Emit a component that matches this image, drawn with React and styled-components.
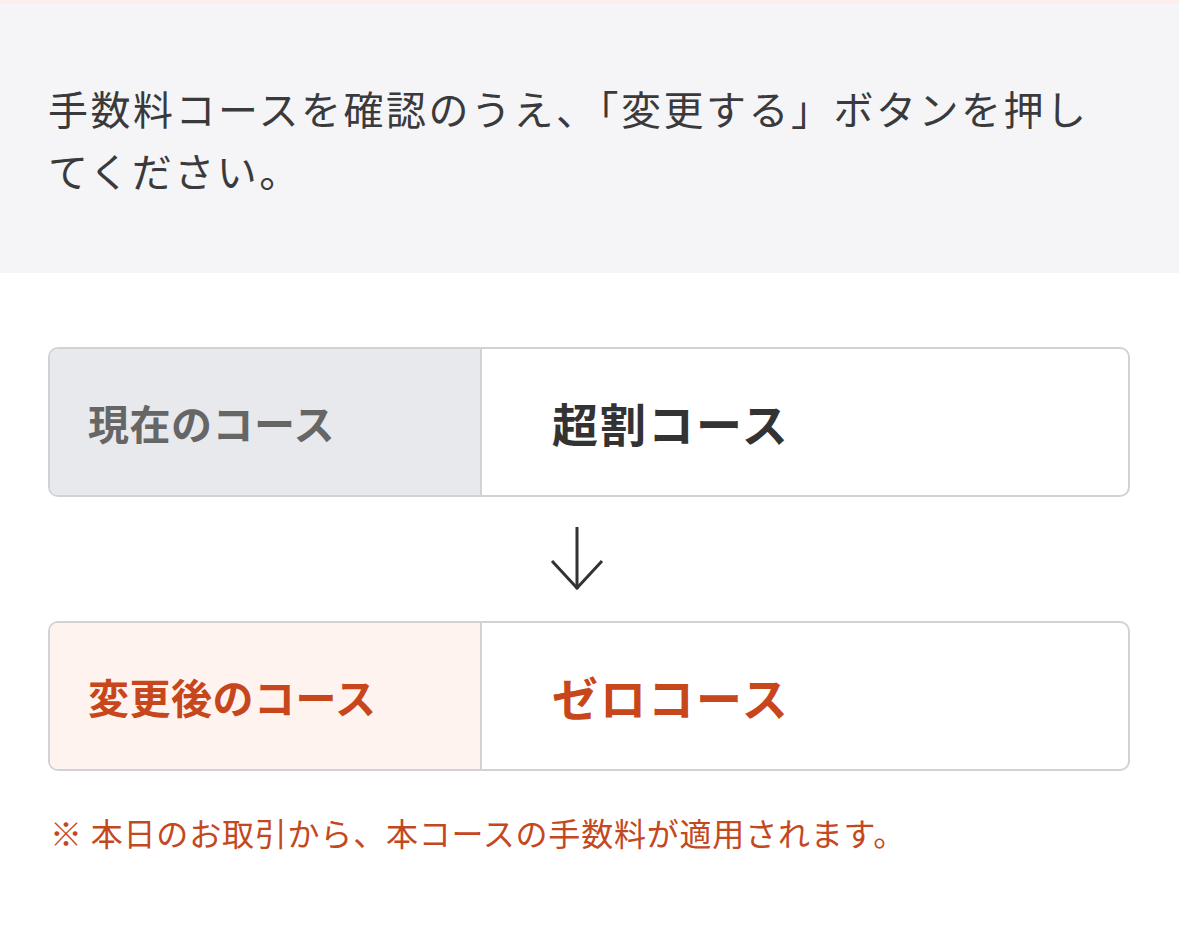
import React from 'react';
import styled, { createGlobalStyle } from 'styled-components';

const GlobalStyle = createGlobalStyle`
  html, body {
    margin: 0;
    padding: 0;
    background: #ffffff;
  }
  body {
    font-family: "Noto Sans CJK JP", "Noto Sans", sans-serif;
    color: #333333;
  }
`;

const Page = styled.div`
  width: 1179px;
  min-height: 939px;
  background: #ffffff;
`;

const TopStrip = styled.div`
  height: 4px;
  background: #fdeeec;
`;

const Intro = styled.section`
  background: #f5f5f7;
  padding: 73px 60px 72px 48px;
`;

const IntroText = styled.p`
  margin: 0;
  font-size: 40px;
  line-height: 62px;
  letter-spacing: 2.5px;
  font-weight: 400;
  color: #3a3a3c;
`;

const Body = styled.main`
  padding: 74px 49px 0 48px;
`;

const CourseRow = styled.div`
  display: grid;
  grid-template-columns: 432px 1fr;
  height: 150px;
  box-sizing: border-box;
  border: 2px solid #d2d2d4;
  border-radius: 10px;
  overflow: hidden;
  background: #ffffff;
`;

const Label = styled.div`
  display: flex;
  align-items: center;
  padding-left: 38px;
  border-right: 2px solid #d2d2d4;
  background: ${({ $accent }) => ($accent ? '#fff3f0' : '#e8e9ec')};
  color: ${({ $accent }) => ($accent ? '#c8461b' : '#666666')};
  font-size: 41px;
  font-weight: 700;
  letter-spacing: 0.5px;
`;

const Value = styled.div`
  display: flex;
  align-items: center;
  padding-left: 70px;
  color: ${({ $accent }) => ($accent ? '#c8461b' : '#333333')};
  font-size: 46px;
  font-weight: 700;
  letter-spacing: 2px;
`;

const ArrowWrap = styled.div`
  height: 124px;
  display: flex;
  align-items: center;
  padding-left: 501px;
`;

const Note = styled.p`
  margin: 37px 0 0 2px;
  font-size: 32px;
  line-height: 48px;
  letter-spacing: 0.8px;
  color: #c4481e;
`;

function DownArrow() {
  return (
    <svg width="56" height="66" viewBox="0 0 56 66" fill="none">
      <path d="M28 1 V63" stroke="#333333" strokeWidth="3" />
      <path d="M3 35 L28 62 L53 35" stroke="#333333" strokeWidth="3" strokeLinejoin="miter" />
    </svg>
  );
}

function Course({ label, value, accent }) {
  return (
    <CourseRow>
      <Label $accent={accent}>{label}</Label>
      <Value $accent={accent}>{value}</Value>
    </CourseRow>
  );
}

export default function App() {
  return (
    <Page>
      <GlobalStyle />
      <TopStrip />
      <Intro>
        <IntroText>手数料コースを確認のうえ、「変更する」ボタンを押してください。</IntroText>
      </Intro>
      <Body>
        <Course label="現在のコース" value="超割コース" />
        <ArrowWrap>
          <DownArrow />
        </ArrowWrap>
        <Course label="変更後のコース" value="ゼロコース" accent />
        <Note>※ 本日のお取引から、本コースの手数料が適用されます。</Note>
      </Body>
    </Page>
  );
}
